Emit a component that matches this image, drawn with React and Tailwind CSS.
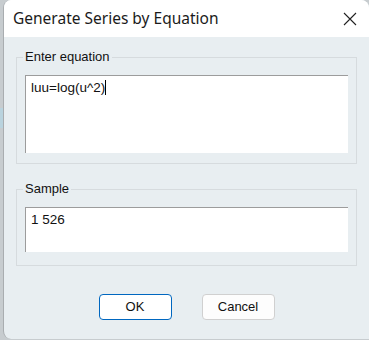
function Group({ label, height, bottom, children }) {
  return (
    <fieldset className={`border border-[#d6dbde] px-[8px] ${bottom}`}>
      <legend className="-ml-[2px] px-[2px] text-[13px] leading-[14px] text-[#111]">
        {label}
      </legend>
      <div
        className={`mt-[11px] ${height} bg-white border-t border-l border-[#9c9c9c] px-[5px] pt-[4px] text-[13.5px] leading-[15px] text-[#111]`}
      >
        {children}
      </div>
    </fieldset>
  );
}

export default function App() {
  return (
    <div
      className="w-[369px] h-[340px] flex bg-[#c7cccf] overflow-hidden"
      style={{ fontFamily: "'Liberation Sans', Arial, sans-serif" }}
    >
      {/* bit of window behind */}
      <div className="w-[3px] flex flex-col">
        <div className="h-[108px]" />
        <div className="h-[20px] bg-[#b9d3de]" />
      </div>

      <div className="flex-1 h-[339px] flex flex-col rounded-t-[8px] rounded-bl-[8px] overflow-hidden border-l border-[#a9adb0] bg-[#e8eef1]">
        <div className="h-[37px] bg-white flex items-center justify-between pl-[9px] pr-[12px]">
          <span
            className="text-[15.5px] text-[#1b1b1b]"
            style={{ fontFamily: "'Noto Sans', 'Open Sans', sans-serif" }}
          >
            Generate Series by Equation
          </span>
          <svg width="14" height="14" viewBox="0 0 14 14" className="text-[#222]">
            <path d="M1 1 L13 13 M13 1 L1 13" stroke="currentColor" strokeWidth="1.1" fill="none" />
          </svg>
        </div>

        <div className="flex flex-col px-[12px] pt-[13px]">
          <Group label="Enter equation" height="h-[78px]" bottom="pb-[10px]">
            <span>luu=log(u^2)</span>
            <span className="inline-block w-px h-[15px] bg-black align-[-3px]" />
          </Group>

          <div className="h-[18px]" />

          <Group label="Sample" height="h-[45px]" bottom="pb-[13px]">
            1 526
          </Group>

          <div className="flex justify-center gap-[30px] mt-[28px]">
            <button className="w-[73px] h-[26px] rounded-[4px] border border-[#0067c0] bg-white text-[13px] text-[#111]">
              OK
            </button>
            <button className="w-[73px] h-[26px] rounded-[4px] border border-[#d0d0d0] bg-[#fdfdfd] text-[13px] text-[#111]">
              Cancel
            </button>
          </div>
        </div>
      </div>
    </div>
  );
}
